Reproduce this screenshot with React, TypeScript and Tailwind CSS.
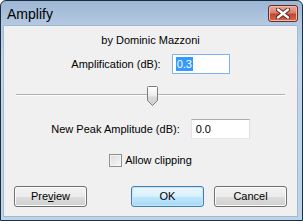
import React from 'react';

const ui = { fontFamily: '"Liberation Sans", Arial, sans-serif' };

function CloseGlyph() {
  return (
    <svg width="14" height="11" viewBox="0 0 14 11">
      <path
        d="M2 1.5 L12 9.5 M12 1.5 L2 9.5"
        stroke="#5a1e18"
        strokeWidth="4.2"
        strokeLinecap="round"
        fill="none"
      />
      <path
        d="M2 1.5 L12 9.5 M12 1.5 L2 9.5"
        stroke="#ffffff"
        strokeWidth="2.4"
        strokeLinecap="round"
        fill="none"
      />
    </svg>
  );
}

function Thumb() {
  return (
    <svg width="11" height="20" viewBox="0 0 11 20">
      <defs>
        <linearGradient id="thumbFill" x1="0" y1="0" x2="0" y2="1">
          <stop offset="0" stopColor="#ffffff" />
          <stop offset="0.5" stopColor="#ececec" />
          <stop offset="0.55" stopColor="#d9d9d9" />
          <stop offset="1" stopColor="#cfcfcf" />
        </linearGradient>
      </defs>
      <path
        d="M1.5 0.5 H9.5 Q10.5 0.5 10.5 1.5 V14.5 L5.5 19.5 L0.5 14.5 V1.5 Q0.5 0.5 1.5 0.5 Z"
        fill="url(#thumbFill)"
        stroke="#7c7c7c"
      />
    </svg>
  );
}

function WinButton({ children, isDefault }: { children: React.ReactNode; isDefault?: boolean }) {
  return (
    <button
      className={
        'h-[21px] w-[73px] rounded-[3px] border text-[11px] text-black leading-none flex items-center justify-center ' +
        (isDefault
          ? 'border-[#3c7fb1] bg-[linear-gradient(#eaf6fd_0%,#d9f0fc_50%,#bee6fd_51%,#a7d9f5_100%)] shadow-[inset_0_0_0_1px_#c6e6f8]'
          : 'border-[#707070] bg-[linear-gradient(#f2f2f2_0%,#ebebeb_50%,#dddddd_51%,#cfcfcf_100%)] shadow-[inset_0_0_0_1px_#fcfcfc]')
      }
      style={ui}
    >
      {children}
    </button>
  );
}

export default function App() {
  return (
    <div
      className="w-[303px] h-[221px] flex flex-col rounded-t-[6px] border border-[#1e2d3d] bg-[linear-gradient(#9cb6d4_0px,#b4c9e2_24px,#c2d5ea_60px,#bed2e8_100%)] text-black"
      style={ui}
    >
      {/* title bar */}
      <div className="h-[24px] flex items-start justify-between pl-[6px] pr-[4px] shrink-0">
        <span className="text-[14px] leading-none mt-[6px]">Amplify</span>
        <div className="mt-[4px] w-[30px] h-[17px] rounded-[3px] border border-[#6b2b23] bg-[linear-gradient(#e9a99c_0%,#d98070_45%,#c2452f_55%,#cf6a50_100%)] flex items-center justify-center shadow-[inset_0_0_0_1px_#f1bcae]">
          <CloseGlyph />
        </div>
      </div>

      {/* client area */}
      <div className="flex-1 ml-[2px] mr-[4px] mb-[3px] bg-[#f0f0f0] border border-[#a3b8d2] flex flex-col text-[11px]">
        <div className="text-center leading-none mt-[9px]">by Dominic Mazzoni</div>

        <div className="flex items-center justify-center gap-[11px] mt-[8px]">
          <span>Amplification (dB):</span>
          <div className="w-[58px] h-[20px] border border-[#7eb4ea] bg-white flex items-center pl-[3px]">
            <span className="bg-[#3399ff] text-white leading-[14px] px-px">0.3</span>
          </div>
        </div>

        {/* slider */}
        <div className="relative h-[20px] mt-[12px] mx-[12px]">
          <div className="absolute left-0 right-0 top-[8px] h-[2px] border-t border-[#b0b0b0] border-b border-b-[#ffffff] bg-[#e7eaea]" />
          <div className="absolute left-[131px] top-0">
            <Thumb />
          </div>
        </div>

        <div className="flex items-center justify-center gap-[11px] mt-[13px]">
          <span>New Peak Amplitude (dB):</span>
          <div className="w-[59px] h-[20px] border border-[#abadb3] border-b-[#e3e9ef] border-l-[#e2e3ea] border-r-[#dbdfe6] bg-white flex items-center pl-[4px]">
            <span>0.0</span>
          </div>
        </div>

        <div className="flex items-center justify-center gap-[3px] mt-[15px]">
          <div className="w-[13px] h-[13px] border border-[#8e8f8f] bg-[linear-gradient(135deg,#dcdcdc,#f6f6f6)] shadow-[inset_0_0_0_1px_#f4f4f4]" />
          <span className="leading-none">Allow clipping</span>
        </div>

        <div className="flex items-center mt-auto mb-[9px] px-[10px]">
          <WinButton>
            Pre<span className="underline">v</span>iew
          </WinButton>
          <div className="flex-1" />
          <WinButton isDefault>OK</WinButton>
          <div className="w-[10px]" />
          <WinButton>Cancel</WinButton>
        </div>
      </div>
    </div>
  );
}
